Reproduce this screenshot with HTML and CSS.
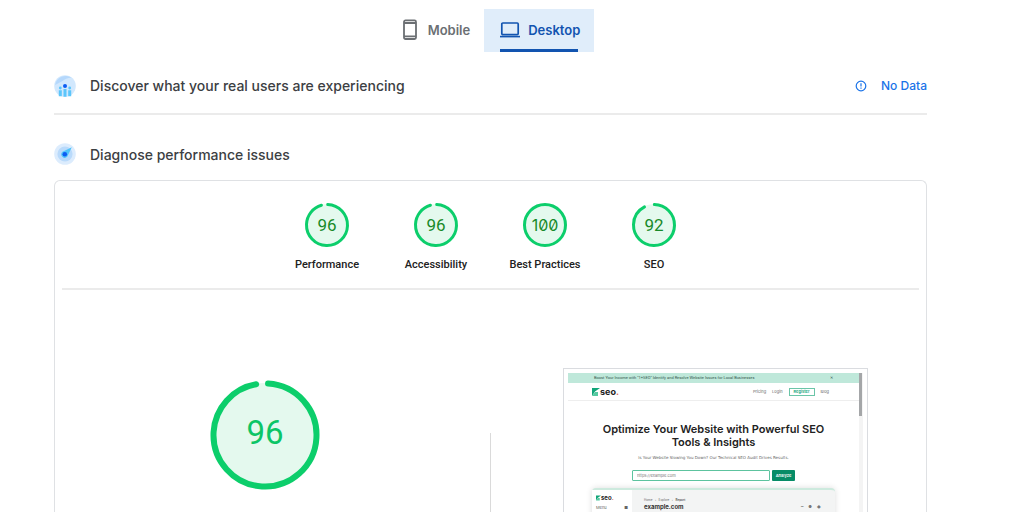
FILE: index.html
```html
<!DOCTYPE html>
<html lang="en">
<head>
<meta charset="utf-8">
<meta name="viewport" content="width=device-width, initial-scale=1">
<title>Performance report</title>
<link rel="stylesheet" href="styles.css">
</head>
<body>
<main class="page">
  <nav class="tabs" role="tablist" aria-label="Device">
    <button class="tab" type="button" role="tab" aria-selected="false">
      <svg class="tab-icon phone" viewBox="0 0 14 22" aria-hidden="true"><rect x="1" y="1.4" width="12" height="18.6" rx="1.5" fill="none" stroke="currentColor" stroke-width="1.8"/><path d="M1 4h12M1 17.4h12" stroke="currentColor" stroke-width="1.8"/></svg>
      <span>Mobile</span>
    </button>
    <button class="tab active" type="button" role="tab" aria-selected="true">
      <svg class="tab-icon laptop" viewBox="0 0 20 16" aria-hidden="true"><rect x="1.8" y="1" width="16.4" height="11.6" rx="1" fill="none" stroke="currentColor" stroke-width="1.7"/><path d="M0 14.6h20" stroke="currentColor" stroke-width="1.6"/></svg>
      <span>Desktop</span>
    </button>
  </nav>

  <header class="section-head users">
    <svg class="section-icon" viewBox="0 0 22 22" aria-hidden="true"><circle cx="11" cy="11" r="10.8" fill="#d2e8fd"/><path d="M1 10A10.8 10.8 0 0 1 18 3C12 2 9 7 1 10z" fill="#b5d8fc"/><circle cx="11" cy="11" r="2" fill="#0d5df2"/><g fill="#5cc6fb"><circle cx="6.3" cy="13" r="1.4"/><circle cx="15.7" cy="13" r="1.4"/><path d="M9.5 14h3v7.8h-3zM4.8 15.2h3v6h-3zM14.2 15.2h3v6h-3z"/></g></svg>
    <h2 class="section-title">Discover what your real users are experiencing</h2>
    <a class="no-data" href="#nodata">
      <svg class="info-icon" viewBox="0 0 12 12" aria-hidden="true"><circle cx="6" cy="6" r="4.8" fill="none" stroke="currentColor" stroke-width="1.2"/><path d="M6 3.2v3.4M6 7.6v1.2" stroke="currentColor" stroke-width="1.2"/></svg>
      <span>No Data</span>
    </a>
  </header>

  <header class="section-head">
    <svg class="section-icon" viewBox="0 0 22 22" aria-hidden="true"><circle cx="11" cy="11" r="10.8" fill="#dcecfd"/><circle cx="11" cy="11" r="7.6" fill="#b9dafb"/><path d="M17.8 4.2L8.5 8.8a3.4 3.4 0 1 0 4.8 4.8z" fill="#4fc3fa"/><circle cx="10.8" cy="11.2" r="2.3" fill="#0d5df2"/></svg>
    <h2 class="section-title">Diagnose performance issues</h2>
  </header>

  <section class="panel">
    <div class="scores">
      <a class="score" href="#performance">
        <svg class="gauge" viewBox="0 0 44 44" aria-hidden="true"><circle class="disc" cx="22" cy="22" r="21"/><circle class="ring" cx="22" cy="22" r="20.5" pathLength="100" stroke-dasharray="95 5" transform="rotate(-88 22 22)"/><text class="num" x="22" y="28">96</text></svg>
        <span>Performance</span>
      </a>
      <a class="score" href="#accessibility">
        <svg class="gauge" viewBox="0 0 44 44" aria-hidden="true"><circle class="disc" cx="22" cy="22" r="21"/><circle class="ring" cx="22" cy="22" r="20.5" pathLength="100" stroke-dasharray="95 5" transform="rotate(-88 22 22)"/><text class="num" x="22" y="28">96</text></svg>
        <span>Accessibility</span>
      </a>
      <a class="score" href="#best-practices">
        <svg class="gauge" viewBox="0 0 44 44" aria-hidden="true"><circle class="disc" cx="22" cy="22" r="21"/><circle class="ring" cx="22" cy="22" r="20.5"/><text class="num slashed" x="22" y="28">100</text></svg>
        <span>Best Practices</span>
      </a>
      <a class="score" href="#seo">
        <svg class="gauge" viewBox="0 0 44 44" aria-hidden="true"><circle class="disc" cx="22" cy="22" r="21"/><circle class="ring" cx="22" cy="22" r="20.5" pathLength="100" stroke-dasharray="92 8" transform="rotate(-89 22 22)"/><text class="num" x="22" y="28">92</text></svg>
        <span>SEO</span>
      </a>
    </div>

    <div class="detail">
      <div class="detail-score">
        <svg class="gauge-large" viewBox="0 0 110 110" role="img" aria-label="96"><circle class="disc" cx="55" cy="55" r="52"/><circle class="ring" cx="55" cy="55" r="51.5" pathLength="100" stroke-dasharray="96.3 3.7" transform="rotate(-86.6 55 55)"/><text class="num" x="55" y="64">96</text></svg>
      </div>
      <div class="divider"></div>
      <div class="detail-shot">
        <div class="frame">
          <div class="site">
            <div class="promo"><span>Boost Your Income with "1+SEO" Identify and Resolve Website Issues for Local Businesses</span><span>✕</span></div>
            <div class="site-nav">
              <div class="brand"><svg class="brand-mark" viewBox="0 0 8 8" aria-hidden="true"><path d="M0 0h8L3 3.5 0 8z" fill="#12a579"/><path d="M3 4h3v4H0z" fill="#56c9a1"/></svg><b>seo<i>.</i></b></div>
              <div class="links"><a href="#pricing">Pricing</a><a href="#login">Login</a><a class="register" href="#register">Register</a><a href="#blog">Blog</a></div>
            </div>
            <h3 class="hero">Optimize Your Website with Powerful SEO<br>Tools &amp; Insights</h3>
            <p class="sub">Is Your Website Slowing You Down? Our Technical SEO Audit Drives Results.</p>
            <form class="search">
              <input class="url" type="text" aria-label="Website address" placeholder="https://example.com">
              <button class="analyze" type="button">Analyze</button>
            </form>
            <div class="preview">
              <div class="preview-side">
                <div class="brand small"><svg class="brand-mark" viewBox="0 0 8 8" aria-hidden="true"><path d="M0 0h8L3 3.5 0 8z" fill="#12a579"/><path d="M3 4h3v4H0z" fill="#56c9a1"/></svg><b>seo<i>.</i></b></div>
                <div class="menu"><span>Menu</span><span>■</span></div>
              </div>
              <div class="preview-main">
                <div class="crumbs">Home &nbsp; › &nbsp; Explore &nbsp; › &nbsp; <b>Report</b></div>
                <div class="domain"><b>example.com</b><span class="tools"><span>━</span><span>●</span><span>◆</span></span></div>
              </div>
            </div>
          </div>
          <div class="track"><div class="thumb"></div></div>
        </div>
      </div>
    </div>
  </section>
</main>
</body>
</html>
```

FILE: styles.css
```css
* { box-sizing: border-box; }
body { margin: 0; background: #fff; color: #3c4043; font-family: Roboto, "Liberation Sans", sans-serif; }
a { color: inherit; text-decoration: none; }
h2, h3, p { margin: 0; }

.page { height: 100vh; overflow: hidden; display: flex; flex-direction: column; padding: 9px 97px 0 54px; }

.tabs { display: flex; justify-content: center; flex: none; }
.tab { display: flex; align-items: center; gap: 8px; height: 43px; padding: 0 14px 1px 16px; border: 0; background: none; color: #6b6f73; font: 600 13px Inter, sans-serif; }
.tab.active { background: linear-gradient(#1254b0, #1254b0) 16px 100% / calc(100% - 32px) 3px no-repeat #e0edfa; color: #1254b0; }
.tab-icon { display: block; flex: none; }
.phone { width: 14px; height: 22px; margin-right: 3px; }
.laptop { width: 20px; height: 16px; }

.section-head { display: flex; align-items: center; flex: none; gap: 14px; height: 52px; }
.users { height: 63px; padding-bottom: 2px; margin-bottom: 13px; border-bottom: 2px solid #ebebeb; padding-top: 8px; }
.section-icon { width: 22px; height: 22px; flex: none; }
.section-title { flex: 1; color: #3c4043; font: 500 14px Inter, sans-serif; }
.no-data { display: flex; align-items: center; gap: 14px; color: #1a73e8; font: 500 12px Inter, sans-serif; }
.info-icon { width: 12px; height: 12px; }

.panel { flex: 1 0 auto; padding: 0 7px; border: 1px solid #dfe1e4; border-bottom: 0; border-radius: 6px 6px 0 0; }
.scores { display: grid; grid-template-columns: repeat(4, 109px); justify-content: center; height: 109px; padding-top: 22px; border-bottom: 2px solid #ebebeb; }
.score { display: flex; flex-direction: column; align-items: center; gap: 10px; color: #212121; font-size: 11px; font-weight: 500; line-height: 16px; }
.gauge { width: 44px; height: 44px; overflow: visible; }
.disc { fill: #e4f9ee; }
.ring { fill: none; stroke: #0cce6b; stroke-width: 3; stroke-linecap: round; }
.num { fill: #188a29; font: 400 17px Roboto, sans-serif; text-anchor: middle; }
.slashed { font: 400 16px Inter, sans-serif; font-feature-settings: "zero"; }

.detail { display: grid; grid-template-columns: 1fr 1px 1fr; padding-top: 78px; }
.detail-score { display: flex; justify-content: center; align-items: flex-start; padding: 12px 22px 0 0; }
.gauge-large { width: 110px; height: 110px; }
.gauge-large .ring { stroke-width: 6; }
.gauge-large .num { fill: #0cc566; font-size: 33px; }
.divider { margin-top: 65px; background: #dadada; }
.detail-shot { display: flex; justify-content: center; padding-left: 21px; }
.frame { display: flex; width: 305px; height: 220px; padding: 4px; border: 1px solid #dadce0; overflow: hidden; }
.track { width: 4px; background: #f4f4f4; }
.thumb { width: 3px; height: 43px; background: #a4a6a8; }

.site { flex: 1; color: #666; font: 4px/6px Inter, sans-serif; }
.promo { display: flex; justify-content: space-between; height: 10px; padding: 2px 26px; background: #bfe8da; color: #33564c; font-family: Roboto, sans-serif; }
.site-nav { display: flex; justify-content: space-between; align-items: center; height: 18px; padding: 0 30px 0 24px; border-bottom: 1px solid #eee; }
.brand { display: flex; align-items: center; color: #222; font-size: 9px; line-height: 9px; }
.brand i { color: #e06a55; font-style: normal; }
.brand-mark { width: 8px; height: 8px; }
.links { display: flex; align-items: center; gap: 6px; }
.register { padding: 0 4px; border: 1px solid #6bc5a8; color: #12a579; font-weight: 600; }
.hero { margin-top: 22px; color: #222; font: 600 11px/13px Inter, sans-serif; text-align: center; white-space: nowrap; }
.sub { margin-top: 6px; font-family: "DejaVu Sans", sans-serif; font-size: 4px; text-align: center; }
.search { display: flex; justify-content: center; gap: 2px; margin: 9px 0 7px; }
.url { width: 138px; height: 11px; padding: 0 4px; border: 1px solid #5dc39f; border-radius: 1px; color: #555; font: 4px Inter, sans-serif; }
.url::placeholder { color: #777; }
.analyze { width: 23px; height: 11px; padding: 0; border: 0; border-radius: 1px; background: #078c67; color: #fff; font: 600 4px Inter, sans-serif; }
.preview { display: flex; height: 60px; margin: 0 24px; border-top: 2px solid #cdeade; border-radius: 4px; background: #f3f4f4; box-shadow: 0 0 6px #ddd; }
.preview-side { width: 40px; padding: 3px 4px; background: #fff; }
.small { font-size: 6px; }
.small .brand-mark { width: 5px; height: 6px; }
.menu { display: flex; justify-content: space-between; margin-top: 3px; }
.preview-main { flex: 1; padding: 7px 14px 0 12px; }
.crumbs { font-size: 3px; line-height: 6px; }
.domain { display: flex; justify-content: space-between; color: #333; font-size: 6px; line-height: 8px; }
.tools { display: flex; gap: 5px; color: #777; font-size: 4px; }
```
